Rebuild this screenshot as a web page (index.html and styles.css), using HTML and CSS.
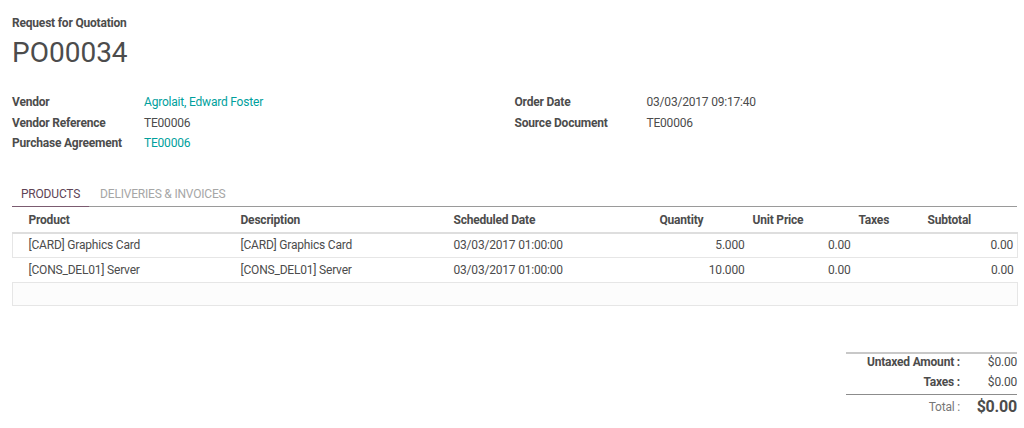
FILE: index.html
```html
<!DOCTYPE html>
<html>
<head>
<meta charset="utf-8">
<link rel="stylesheet" href="styles.css">
</head>
<body>
<div class="sheet">
  <div class="doc-type">Request for Quotation</div>
  <h1 class="doc-name">PO00034</h1>

  <div class="groups">
    <div class="group">
      <div class="field"><span class="label">Vendor</span><span class="value link">Agrolait, Edward Foster</span></div>
      <div class="field"><span class="label">Vendor Reference</span><span class="value">TE00006</span></div>
      <div class="field"><span class="label">Purchase Agreement</span><span class="value link">TE00006</span></div>
    </div>
    <div class="group">
      <div class="field"><span class="label">Order Date</span><span class="value">03/03/2017 09:17:40</span></div>
      <div class="field"><span class="label">Source Document</span><span class="value">TE00006</span></div>
    </div>
  </div>

  <div class="tabs">
    <div class="tab active">PRODUCTS</div>
    <div class="tab">DELIVERIES &amp; INVOICES</div>
  </div>

  <table class="lines">
    <colgroup>
      <col class="c0"><col class="c1"><col class="c2"><col class="c3"><col class="c4"><col class="c5"><col class="c6"><col class="c7">
    </colgroup>
    <thead>
      <tr>
        <th></th><th>Product</th><th>Description</th><th>Scheduled Date</th><th>Quantity</th><th>Unit Price</th><th>Taxes</th><th>Subtotal</th>
      </tr>
    </thead>
    <tbody>
      <tr class="boxed">
        <td></td><td>[CARD] Graphics Card</td><td>[CARD] Graphics Card</td><td>03/03/2017 01:00:00</td><td class="num">5.000</td><td class="num">0.00</td><td></td><td class="num">0.00</td>
      </tr>
      <tr>
        <td></td><td>[CONS_DEL01] Server</td><td>[CONS_DEL01] Server</td><td>03/03/2017 01:00:00</td><td class="num">10.000</td><td class="num">0.00</td><td></td><td class="num">0.00</td>
      </tr>
      <tr class="boxed blank">
        <td colspan="8"></td>
      </tr>
    </tbody>
  </table>

  <div class="totals-wrap">
    <div class="totals">
      <div class="trow first"><span class="tlabel">Untaxed Amount :</span><span class="tval">$0.00</span></div>
      <div class="trow second"><span class="tlabel">Taxes :</span><span class="tval">$0.00</span></div>
      <div class="trow grand"><span class="tlabel">Total :</span><span class="tval">$0.00</span></div>
    </div>
  </div>
</div>
</body>
</html>
```

FILE: styles.css
```css
html, body {
  margin: 0;
  padding: 0;
  background: #ffffff;
}
body {
  font-family: Roboto, "Liberation Sans", sans-serif;
  font-size: 12px;
  letter-spacing: -0.2px;
  color: #4c4c4c;
}
.sheet {
  padding: 14px 7px 0 12px;
}
.doc-type {
  font-weight: bold;
  line-height: 18px;
}
.doc-name {
  margin: 3px 0 0 0;
  font-size: 28px;
  font-weight: normal;
  line-height: 36px;
  letter-spacing: 0;
  color: #4c4c4c;
}
.groups {
  display: flex;
  margin-top: 21px;
}
.group {
  flex: 1 1 0;
}
.field {
  display: flex;
  line-height: 20.5px;
}
.label {
  width: 132px;
  flex: none;
  font-weight: bold;
}
.link {
  color: #00a09d;
}
.tabs {
  display: flex;
  margin-top: 28px;
  border-bottom: 1px solid #9a9a9a;
}
.tab {
  padding: 0 9px 0 9px;
  line-height: 24px;
  color: #a6a6a6;
  margin-bottom: -1px;
  border-bottom: 1px solid transparent;
  margin-right: 2px;
}
.tab.active {
  color: #5e4456;
  border-bottom-color: #7b5b70;
}
.lines {
  width: 100%;
  border-collapse: collapse;
  table-layout: fixed;
}
.c0 { width: 12px; }
.c1 { width: 212px; }
.c2 { width: 213px; }
.c3 { width: 206px; }
.c4 { width: 93px; }
.c5 { width: 106px; }
.c6 { width: 69px; }
.c7 { width: 94px; }
.lines th {
  font-weight: bold;
  text-align: left;
  height: 24px;
  padding: 1px 4px 0 4px;
  border-bottom: 2px solid #dedede;
}
.lines td {
  height: 24px;
  padding: 0 4px;
  white-space: nowrap;
}
.lines td.num {
  text-align: right;
}
.lines tr.boxed td {
  border-top: 1px solid #e6e6e6;
  border-bottom: 1px solid #e6e6e6;
}
.lines tr.boxed td:first-child {
  border-left: 1px solid #e6e6e6;
}
.lines tr.boxed td:last-child {
  border-right: 1px solid #e6e6e6;
}
.lines tr.boxed:first-child td {
  height: 23px;
  border-top: none;
}
.lines tr.blank td {
  height: 22px;
  background: #fcfcfc;
}
.totals-wrap {
  display: flex;
  justify-content: flex-end;
  margin-top: 46px;
}
.totals {
  width: 171px;
  border-top: 2px solid #c8c8c8;
}
.trow {
  display: flex;
  justify-content: flex-end;
  line-height: 20px;
}
.trow.first {
  line-height: 17px;
}
.trow.second {
  line-height: 23px;
}
.tlabel {
  font-weight: bold;
  text-align: right;
}
.tval {
  width: 57px;
  text-align: right;
}
.trow.grand {
  border-top: 1px solid #8c8c8c;
  line-height: 24px;
}
.trow.grand .tlabel {
  font-weight: normal;
  color: #777;
}
.trow.grand .tval {
  font-weight: bold;
  font-size: 16px;
  color: #4c4c4c;
}
```
